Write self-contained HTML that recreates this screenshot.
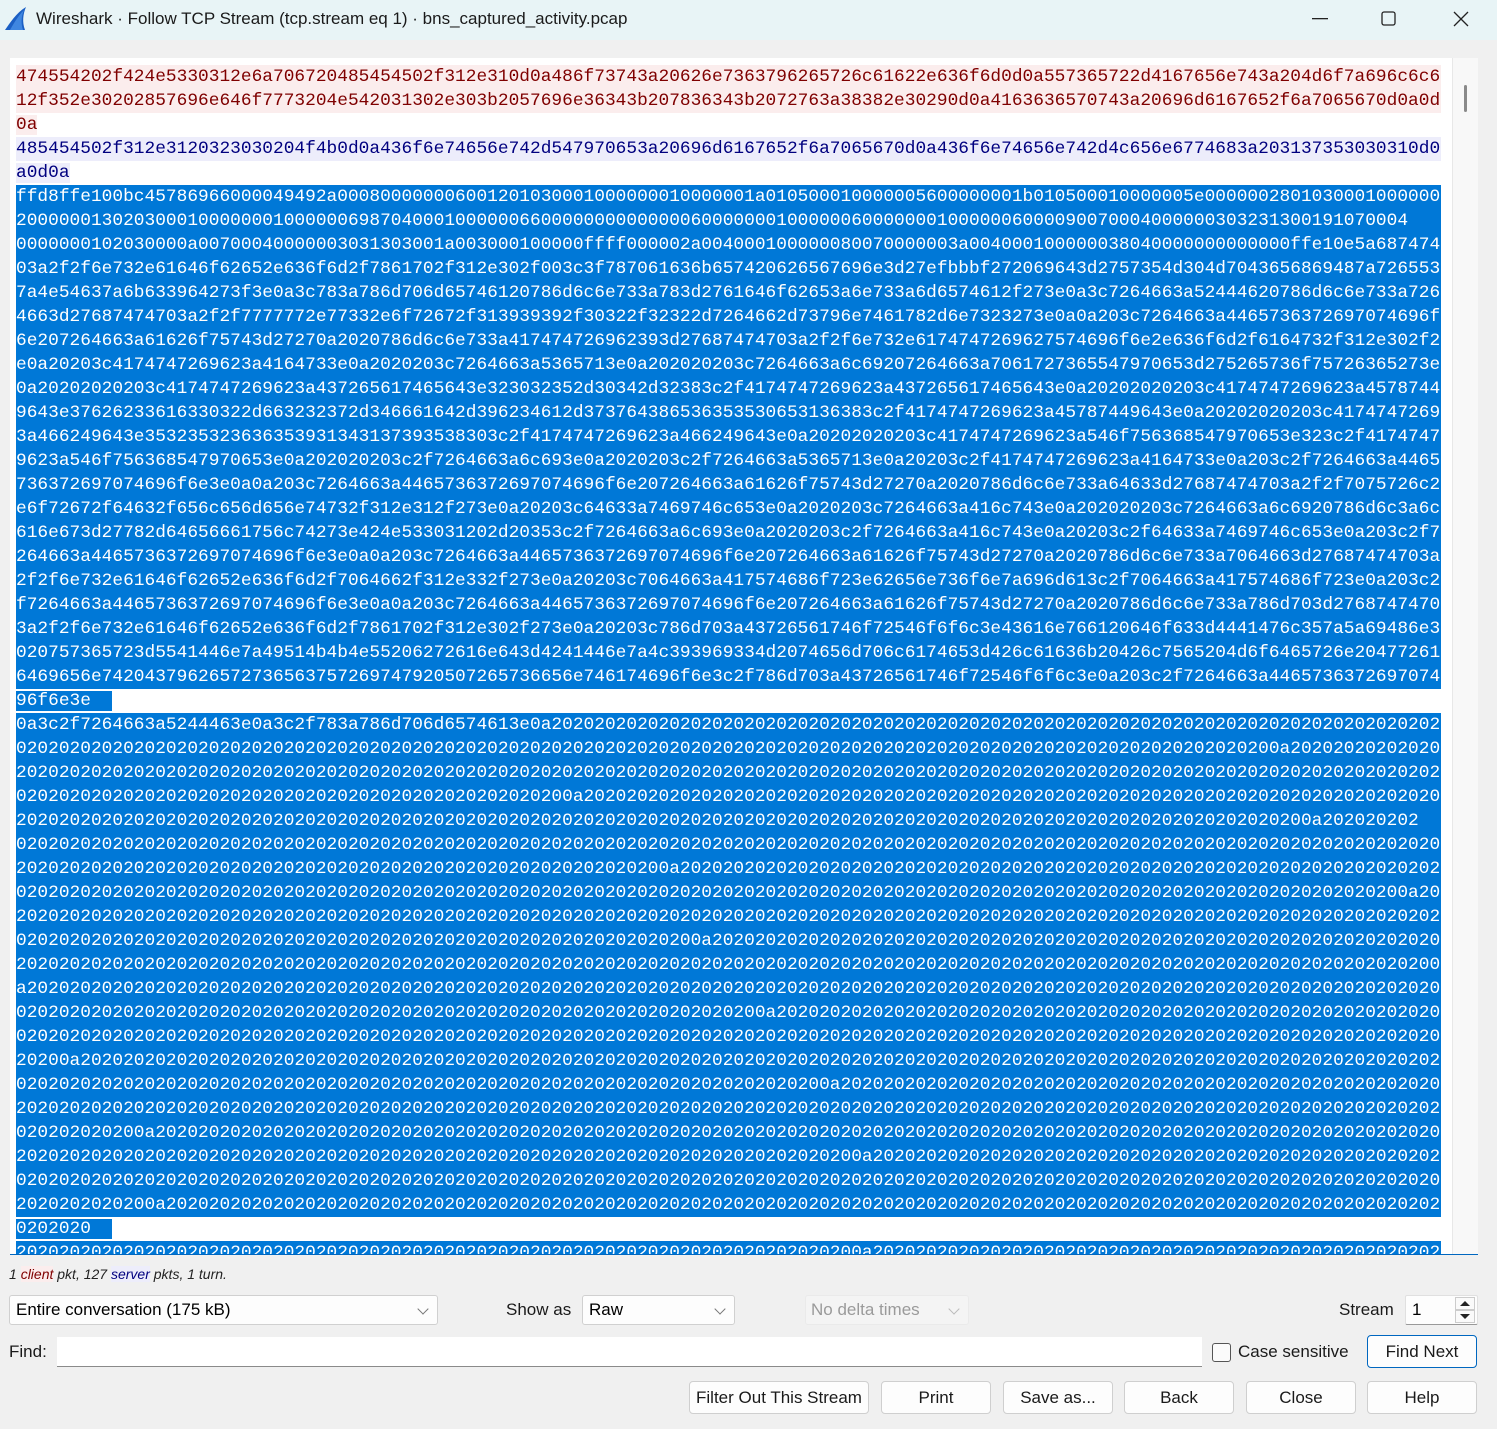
<!DOCTYPE html>
<html><head><meta charset="utf-8">
<style>
*{margin:0;padding:0;box-sizing:border-box}
body{width:1497px;height:1429px;background:#f0f0f0;font-family:"Liberation Sans",sans-serif;position:relative;overflow:hidden;color:#000}
.title{position:absolute;left:0;top:0;width:1497px;height:40px;background:#e8f4f6}
.title .t{position:absolute;left:36px;top:9px;font-size:17px;color:#1a1a1a}
.area{position:absolute;left:10px;top:58px;width:1468px;height:1197px;background:#fff;border-bottom:1px solid #0067c0;overflow:hidden}
.sb{position:absolute;left:1442px;top:0;width:26px;height:1196px;background:#f8f8f8;border-left:1px solid #e8e8e8}
.thumb{position:absolute;left:11px;top:27px;width:3px;height:27px;background:#8a8a8a;border-radius:2px}
.txt{position:absolute;left:6px;top:7px;font-family:"Liberation Mono",monospace;font-size:17.85px;line-height:24px;white-space:normal}
.l{height:24px;overflow:hidden;width:1425px;white-space:pre}
.c{background:#fbeded;color:#7f0000}
.s{background:#ededfb;color:#00007f}
.x{background:#0078d7;color:#fff}
.row{height:24px;white-space:pre}
.ui{position:absolute;font-size:17px;color:#1a1a1a;white-space:nowrap}
.box{position:absolute;background:#fdfdfd;border:1px solid #d0d0d0;border-radius:3px;font-size:17px;padding-left:6px;line-height:28px}
.chev{position:absolute;right:10px;top:9px;width:8px;height:8px;border-right:1.3px solid #777;border-bottom:1.3px solid #777;transform:rotate(45deg)}
.btn{position:absolute;top:1381px;height:33px;background:#fdfdfd;border:1px solid #cfcfcf;border-radius:4px;font-size:17px;text-align:center;line-height:31px;color:#1a1a1a}
</style></head><body>
<div class="title">
<svg style="position:absolute;left:4px;top:5px" width="24" height="26" viewBox="0 0 24 26"><path d="M1 25 C6 18 12 8 22 2 C19 9 18 17 21 25 Z" fill="#1b5fc4"/><path d="M6 25 C10 18 14 11 20 5 C17 12 17 19 19 25Z" fill="#3f86e0"/></svg>
<div class="t">Wireshark · Follow TCP Stream (tcp.stream eq 1) · bns_captured_activity.pcap</div>
<svg style="position:absolute;left:1312px;top:18px" width="16" height="2"><rect width="16" height="1.3" fill="#222"/></svg>
<svg style="position:absolute;left:1381px;top:11px" width="16" height="16"><rect x="1" y="1" width="13" height="13" rx="2" fill="none" stroke="#222" stroke-width="1.3"/></svg>
<svg style="position:absolute;left:1453px;top:11px" width="16" height="16"><path d="M1 1L15 15M15 1L1 15" stroke="#222" stroke-width="1.3"/></svg>
</div>

<div class="area">
<div class="txt"><div class="l c">474554202f424e5330312e6a706720485454502f312e310d0a486f73743a20626e7363796265726c61622e636f6d0d0a557365722d4167656e743a204d6f7a696c6c6</div><div class="l c">12f352e30202857696e646f7773204e542031302e303b2057696e36343b207836343b2072763a38382e30290d0a4163636570743a20696d6167652f6a7065670d0a0d</div><div class="row"><span class="c">0a</span></div><div class="l s">485454502f312e3120323030204f4b0d0a436f6e74656e742d547970653a20696d6167652f6a7065670d0a436f6e74656e742d4c656e6774683a203137353030310d0</div><div class="row"><span class="s">a0d0a</span></div><div class="l x">ffd8ffe100bc45786966000049492a000800000006001201030001000000010000001a010500010000005600000001b010500010000005e0000002801030001000000</div><div class="l x">2000000130203000100000001000000698704000100000066000000000000006000000010000006000000010000006000090070004000000303231300191070004</div><div class="l x">0000000102030000a00700040000003031303001a003000100000ffff000002a004000100000080070000003a004000100000038040000000000000ffe10e5a6874747</div><div class="l x">03a2f2f6e732e61646f62652e636f6d2f7861702f312e302f003c3f787061636b657420626567696e3d27efbbbf272069643d2757354d304d7043656869487a726553</div><div class="l x">7a4e54637a6b633964273f3e0a3c783a786d706d65746120786d6c6e733a783d2761646f62653a6e733a6d6574612f273e0a3c7264663a52444620786d6c6e733a726</div><div class="l x">4663d27687474703a2f2f7777772e77332e6f72672f313939392f30322f32322d7264662d73796e7461782d6e7323273e0a0a203c7264663a4465736372697074696f</div><div class="l x">6e207264663a61626f75743d27270a2020786d6c6e733a417474726962393d27687474703a2f2f6e732e6174747269627574696f6e2e636f6d2f6164732f312e302f273</div><div class="l x">e0a20203c4174747269623a4164733e0a2020203c7264663a5365713e0a202020203c7264663a6c69207264663a7061727365547970653d275265736f75726365273e</div><div class="l x">0a20202020203c4174747269623a437265617465643e323032352d30342d32383c2f4174747269623a437265617465643e0a20202020203c4174747269623a4578744</div><div class="l x">9643e37626233616330322d663232372d346661642d396234612d373764386536353530653136383c2f4174747269623a45787449643e0a20202020203c417474726962</div><div class="l x">3a466249643e353235323636353931343137393538303c2f4174747269623a466249643e0a20202020203c4174747269623a546f756368547970653e323c2f417474726</div><div class="l x">9623a546f756368547970653e0a202020203c2f7264663a6c693e0a2020203c2f7264663a5365713e0a20203c2f4174747269623a4164733e0a203c2f7264663a4465</div><div class="l x">736372697074696f6e3e0a0a203c7264663a4465736372697074696f6e207264663a61626f75743d27270a2020786d6c6e733a64633d27687474703a2f2f7075726c2</div><div class="l x">e6f72672f64632f656c656d656e74732f312e312f273e0a20203c64633a7469746c653e0a2020203c7264663a416c743e0a202020203c7264663a6c6920786d6c3a6c</div><div class="l x">616e673d27782d64656661756c74273e424e533031202d20353c2f7264663a6c693e0a2020203c2f7264663a416c743e0a20203c2f64633a7469746c653e0a203c2f7</div><div class="l x">264663a4465736372697074696f6e3e0a0a203c7264663a4465736372697074696f6e207264663a61626f75743d27270a2020786d6c6e733a7064663d27687474703a</div><div class="l x">2f2f6e732e61646f62652e636f6d2f7064662f312e332f273e0a20203c7064663a417574686f723e62656e736f6e7a696d613c2f7064663a417574686f723e0a203c2</div><div class="l x">f7264663a4465736372697074696f6e3e0a0a203c7264663a4465736372697074696f6e207264663a61626f75743d27270a2020786d6c6e733a786d703d2768747470</div><div class="l x">3a2f2f6e732e61646f62652e636f6d2f7861702f312e302f273e0a20203c786d703a43726561746f72546f6f6c3e43616e766120646f633d4441476c357a5a69486e3</div><div class="l x">020757365723d5541446e7a49514b4b4e55206272616e643d4241446e7a4c393969334d2074656d706c6174653d426c61636b20426c7565204d6f6465726e20477261</div><div class="l x">6469656e74204379626572736563757269747920507265736656e746174696f6e3c2f786d703a43726561746f72546f6f6c3e0a203c2f7264663a44657363726970740746</div><div class="row"><span class="x">96f6e3e  </span></div><div class="l x">0a3c2f7264663a5244463e0a3c2f783a786d706d6574613e0a20202020202020202020202020202020202020202020202020202020202020202020202020202020202</div><div class="l x">0202020202020202020202020202020202020202020202020202020202020202020202020202020202020202020202020202020202020202020200a2020202020202020</div><div class="l x">2020202020202020202020202020202020202020202020202020202020202020202020202020202020202020202020202020202020202020202020202020202020202</div><div class="l x">0202020202020202020202020202020202020202020202020200a20202020202020202020202020202020202020202020202020202020202020202020202020202020</div><div class="l x">2020202020202020202020202020202020202020202020202020202020202020202020202020202020202020202020202020202020202020202020200a202020202</div><div class="l x">0202020202020202020202020202020202020202020202020202020202020202020202020202020202020202020202020202020202020202020202020202020202020</div><div class="l x">2020202020202020202020202020202020202020202020202020202020200a2020202020202020202020202020202020202020202020202020202020202020202020202</div><div class="l x">0202020202020202020202020202020202020202020202020202020202020202020202020202020202020202020202020202020202020202020202020202020200a2020</div><div class="l x">2020202020202020202020202020202020202020202020202020202020202020202020202020202020202020202020202020202020202020202020202020202020202</div><div class="l x">0202020202020202020202020202020202020202020202020202020202020200a20202020202020202020202020202020202020202020202020202020202020202020</div><div class="l x">2020202020202020202020202020202020202020202020202020202020202020202020202020202020202020202020202020202020202020202020202020202020200</div><div class="l x">a2020202020202020202020202020202020202020202020202020202020202020202020202020202020202020202020202020202020202020202020202020202020202</div><div class="l x">0202020202020202020202020202020202020202020202020202020202020202020200a202020202020202020202020202020202020202020202020202020202020202</div><div class="l x">0202020202020202020202020202020202020202020202020202020202020202020202020202020202020202020202020202020202020202020202020202020202020</div><div class="l x">20200a202020202020202020202020202020202020202020202020202020202020202020202020202020202020202020202020202020202020202020202020202020202</div><div class="l x">0202020202020202020202020202020202020202020202020202020202020202020202020200a2020202020202020202020202020202020202020202020202020202020</div><div class="l x">2020202020202020202020202020202020202020202020202020202020202020202020202020202020202020202020202020202020202020202020202020202020202</div><div class="l x">020202020200a20202020202020202020202020202020202020202020202020202020202020202020202020202020202020202020202020202020202020202020202020</div><div class="l x">2020202020202020202020202020202020202020202020202020202020202020202020202020200a20202020202020202020202020202020202020202020202020202</div><div class="l x">0202020202020202020202020202020202020202020202020202020202020202020202020202020202020202020202020202020202020202020202020202020202020</div><div class="l x">2020202020200a2020202020202020202020202020202020202020202020202020202020202020202020202020202020202020202020202020202020202020202020202</div><div class="row"><span class="x">0202020  </span></div><div class="l x">2020202020202020202020202020202020202020202020202020202020202020202020202020200a2020202020202020202020202020202020202020202020202020202</div></div>
<div class="sb"><div class="thumb"></div></div>
</div>

<div class="ui" style="left:9px;top:1266px;font-size:14px;font-style:italic;color:#222">1 <span style="color:#7f0000;background:#fbeded">client</span> pkt, 127 <span style="color:#00007f;background:#ededfb">server</span> pkts, 1 turn.</div>

<div class="box" style="left:9px;top:1295px;width:429px;height:30px">Entire conversation (175 kB)<div class="chev"></div></div>
<div class="ui" style="left:506px;top:1300px">Show as</div>
<div class="box" style="left:582px;top:1295px;width:153px;height:30px">Raw<div class="chev"></div></div>
<div class="box" style="left:805px;top:1295px;width:164px;height:30px;background:#f4f4f4;border-color:#eaeaea;color:#9a9a9a;padding-left:5px">No delta times<div class="chev" style="border-color:#bbb"></div></div>
<div class="ui" style="left:1339px;top:1300px">Stream</div>
<div class="box" style="left:1405px;top:1295px;width:73px;height:30px;border-color:#e0e0e0;border-bottom-color:#999;border-radius:2px">1
<div style="position:absolute;left:49px;top:1px;width:20px;height:13px;border:1px solid #ccc;background:#fafafa"><svg width="18" height="11" style="position:absolute;left:0;top:0"><path d="M4 8L9 3L14 8Z" fill="#222"/></svg></div>
<div style="position:absolute;left:49px;top:14px;width:20px;height:13px;border:1px solid #ccc;background:#fafafa"><svg width="18" height="11" style="position:absolute;left:0;top:0"><path d="M4 3L9 8L14 3Z" fill="#222"/></svg></div>
</div>

<div class="ui" style="left:9px;top:1342px">Find:</div>
<div style="position:absolute;left:57px;top:1337px;width:1145px;height:30px;background:#fff;border-bottom:1px solid #8a8a8a"></div>
<div style="position:absolute;left:1212px;top:1343px;width:19px;height:19px;border:1px solid #555;border-radius:3px;background:#fbfbfb"></div>
<div class="ui" style="left:1238px;top:1342px">Case sensitive</div>
<div class="btn" style="left:1367px;top:1335px;width:110px;border-color:#0067c0">Find Next</div>

<div class="btn" style="left:689px;width:180px">Filter Out This Stream</div>
<div class="btn" style="left:881px;width:110px">Print</div>
<div class="btn" style="left:1003px;width:110px">Save as...</div>
<div class="btn" style="left:1124px;width:110px">Back</div>
<div class="btn" style="left:1246px;width:110px">Close</div>
<div class="btn" style="left:1367px;width:110px">Help</div>
</body></html>
